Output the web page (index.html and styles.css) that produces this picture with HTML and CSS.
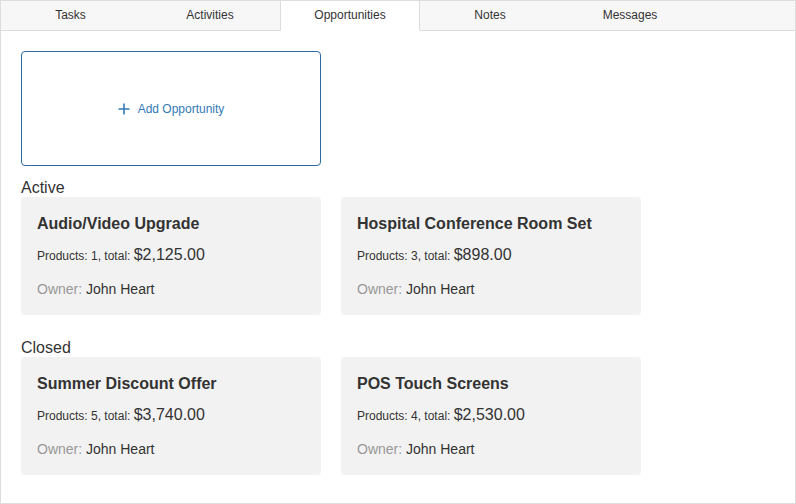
FILE: index.html
```html
<!DOCTYPE html>
<html>
<head>
<meta charset="utf-8">
<link rel="stylesheet" href="styles.css">
</head>
<body>
<div class="panel">
  <div class="tabs">
    <div class="tab tab-first">Tasks</div>
    <div class="tab">Activities</div>
    <div class="tab tab-selected">Opportunities</div>
    <div class="tab">Notes</div>
    <div class="tab">Messages</div>
    <div class="tab-fill"></div>
  </div>
  <div class="content">
    <div class="add-btn">
      <svg class="plus" width="12" height="12" viewBox="0 0 12 12"><path d="M6 0.5V11.5M0.5 6H11.5" stroke="#337ab7" stroke-width="1.6" fill="none"/></svg>
      <span>Add Opportunity</span>
    </div>
    <div class="section">
      <div class="section-title">Active</div>
      <div class="cards">
        <div class="card">
          <div class="card-title">Audio/Video Upgrade</div>
          <div class="card-products">Products: 1, total: <span class="amount">$2,125.00</span></div>
          <div class="card-owner"><span class="owner-label">Owner:</span> John Heart</div>
        </div>
        <div class="card">
          <div class="card-title">Hospital Conference Room Set</div>
          <div class="card-products">Products: 3, total: <span class="amount">$898.00</span></div>
          <div class="card-owner"><span class="owner-label">Owner:</span> John Heart</div>
        </div>
      </div>
    </div>
    <div class="section section-closed">
      <div class="section-title">Closed</div>
      <div class="cards">
        <div class="card">
          <div class="card-title">Summer Discount Offer</div>
          <div class="card-products">Products: 5, total: <span class="amount">$3,740.00</span></div>
          <div class="card-owner"><span class="owner-label">Owner:</span> John Heart</div>
        </div>
        <div class="card">
          <div class="card-title">POS Touch Screens</div>
          <div class="card-products">Products: 4, total: <span class="amount">$2,530.00</span></div>
          <div class="card-owner"><span class="owner-label">Owner:</span> John Heart</div>
        </div>
      </div>
    </div>
  </div>
</div>
</body>
</html>
```
FILE: styles.css
```css
* { box-sizing: border-box; }
html, body {
  margin: 0;
  padding: 0;
  background: #fff;
}
body {
  font-family: "Liberation Sans", Arial, sans-serif;
  color: #333;
}
.panel {
  width: 796px;
  height: 504px;
  border: 1px solid #ddd;
  background: #fff;
}
.tabs {
  display: flex;
  height: 30px;
  margin-left: -1px;
  background: #f7f7f7;
}
.tab {
  width: 140px;
  height: 30px;
  line-height: 29px;
  text-align: center;
  font-size: 12px;
  color: #333;
  border-bottom: 1px solid #ddd;
}
.tab-first {
  border-left: 1px solid #ddd;
}
.tab-selected {
  background: #fff;
  border-left: 1px solid #ddd;
  border-right: 1px solid #ddd;
  border-bottom-color: #fff;
}
.tab-fill {
  flex: 1;
  border-bottom: 1px solid #ddd;
}
.content {
  padding: 20px 20px 0 20px;
}
.add-btn {
  width: 300px;
  height: 115px;
  border: 1px solid #2d6aa3;
  border-radius: 4px;
  display: flex;
  align-items: center;
  justify-content: center;
  gap: 8px;
  color: #337ab7;
  font-size: 12px;
}
.plus { display: block; }
.section {
  margin-top: 12px;
}
.section-closed {
  margin-top: 23px;
}
.section-title {
  font-size: 16px;
  line-height: 19px;
  color: #333;
}
.cards {
  display: flex;
  gap: 20px;
}
.card {
  width: 300px;
  background: #f2f2f2;
  border-radius: 4px;
  padding: 17px 16px 16px 16px;
}
.card-title {
  font-size: 16px;
  font-weight: bold;
  line-height: 20px;
  color: #333;
}
.card-products {
  margin-top: 11px;
  font-size: 12px;
  line-height: 20px;
  color: #333;
}
.amount {
  font-size: 16px;
}
.card-owner {
  margin-top: 13px;
  font-size: 14px;
  line-height: 20px;
  color: #333;
}
.owner-label {
  color: #999;
}
```
